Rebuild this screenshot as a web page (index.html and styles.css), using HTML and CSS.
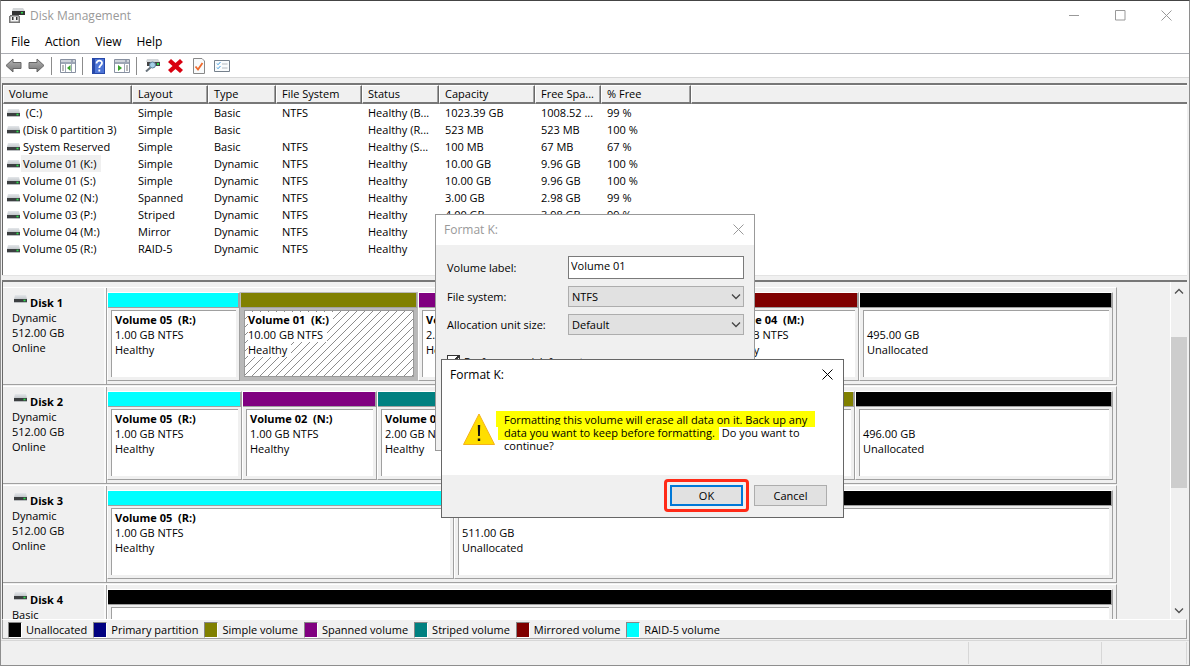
FILE: index.html
```html
<!DOCTYPE html>
<html lang="en">
<head>
<meta charset="utf-8">
<title>Disk Management</title>
<link rel="stylesheet" href="styles.css">
</head>
<body>
<svg class="defs" width="0" height="0" aria-hidden="true">
  <defs>
    <linearGradient id="lid" x1="0" y1="0" x2="0" y2="1"><stop offset="0" stop-color="#e4e7ea"/><stop offset="1" stop-color="#c3c7cb"/></linearGradient>
    <linearGradient id="arrow" x1="0" y1="0" x2="0" y2="1"><stop offset="0" stop-color="#b5b5b5"/><stop offset="1" stop-color="#747474"/></linearGradient>
    <pattern id="hatch" width="8" height="8" patternUnits="userSpaceOnUse"><path d="M-1 9L9 -1M-1 1L1 -1M7 9L9 7" stroke="#8c8c8c" stroke-width="1"/></pattern>
    <symbol id="drive" viewBox="0 0 13 8"><path d="M1 0h11l1 4H0z" fill="url(#lid)"/><path d="M0 4h13v3H0z" fill="#3c3f41"/><path d="M0 7h13v1H0z" fill="#b9bcbf"/><path d="M9.500 4.700h2v1.600h-2z" fill="#29e04a"/></symbol>
    <symbol id="close" viewBox="0 0 11 11"><path d="M.5.500l10 10M10.500.5l-10 10" stroke="currentColor" fill="none"/></symbol>
    <symbol id="chev" viewBox="0 0 10 6"><path d="M1 .5l4 4 4-4" stroke="currentColor" stroke-width="1.300" fill="none"/></symbol>
  </defs>
</svg>
<main class="window">
  <header class="titlebar">
    <svg class="app-icon" width="16" height="15" viewBox="0 0 16 15"><path d="M4 0h10l2 3H3z" fill="#d4d7d9"/><path d="M3 3h13v4H3z" fill="#333"/><path d="M12 4h2v1.500h-2z" fill="#2fd64b"/><path d="M1 7h9v1h1v7H0V8h1z" fill="#777"/><path d="M1.500 8.500h8v5h-8z" fill="#f4f4f4"/><path d="M3 9h1.500v3H3zM7 9h1.500v3H7z" fill="#333"/></svg>
    <h1>Disk Management</h1>
    <div class="caption-buttons">
      <button aria-label="Minimize"><svg width="11" height="11"><path d="M0 5.500h10" stroke="currentColor"/></svg></button>
      <button aria-label="Maximize"><svg width="11" height="11"><path d="M.5.500h9.500v9.500H.5z" stroke="currentColor" fill="none"/></svg></button>
      <button aria-label="Close"><svg width="11" height="11"><use href="#close"/></svg></button>
    </div>
  </header>
  <nav class="menubar"><button>File</button><button>Action</button><button>View</button><button>Help</button></nav>
  <div class="toolbar">
    <button aria-label="Back"><svg width="17" height="15" viewBox="0 0 17 15"><path d="M1 7.500L8 1v3.500h8v6H8V14z" fill="url(#arrow)" stroke="#666"/></svg></button>
    <button aria-label="Forward"><svg width="17" height="15" viewBox="0 0 17 15"><path d="M16 7.500L9 1v3.500H1v6h8V14z" fill="url(#arrow)" stroke="#666"/></svg></button>
    <span class="sep"></span>
    <button aria-label="Show console tree"><svg width="16" height="14" viewBox="0 0 16 14"><path d="M.5.500h15v13H.5z" fill="#fff" stroke="#8790a0"/><path d="M1 1h14v3H1z" fill="#9da6b5"/><path d="M1 2h10M13 2h2" stroke="#fff"/><path d="M1 4.500h14M5.500 5v8M11.500 5v8" stroke="#9da6b5"/><path d="M2 7h2M2 9h2M2 11h2" stroke="#777"/><path d="M10.500 6v6L7 9z" fill="#36a329"/></svg></button>
    <span class="sep"></span>
    <button aria-label="Help"><svg width="13" height="16" viewBox="0 0 13 16"><path d="M0 0h13v16H0z" fill="#2748a8"/><path d="M3 1h9v14H3z" fill="#4c74d6"/><path d="M4.500 5.500c0-4 6-3.500 5.500-.3C9.700 7.500 7.300 7.500 7.300 10M7.300 11.500v2" stroke="#fff" stroke-width="1.800" fill="none"/></svg></button>
    <button aria-label="Show action pane"><svg width="16" height="14" viewBox="0 0 16 14"><path d="M.5.500h15v13H.5z" fill="#fff" stroke="#8790a0"/><path d="M1 1h14v3H1z" fill="#9da6b5"/><path d="M1 2h10M13 2h2" stroke="#fff"/><path d="M1 4.500h14M10.500 5v8" stroke="#9da6b5"/><path d="M12 7h2M12 9h2M12 11h2" stroke="#777"/><path d="M4 6v6l4-3z" fill="#36a329"/></svg></button>
    <span class="sep"></span>
    <button aria-label="Refresh"><svg width="16" height="13" viewBox="0 0 16 13"><path d="M2 0h11l2 3H1z" fill="#d0d4d7"/><path d="M2 3h13v4H2z" fill="#444"/><path d="M12 4h2v2h-2z" fill="#2fd64b"/><path d="M5.500 8.500L1 12.500" stroke="#68737c" stroke-width="2"/><circle cx="7.500" cy="6" r="3" fill="#a6d0e8" stroke="#5c7f98"/></svg></button>
    <button aria-label="Delete"><svg width="15" height="14" viewBox="0 0 15 14"><path d="M3 0l4.500 4L12 0l3 3-4.500 4 4.500 4-3 3-4.500-4L3 14l-3-3 4.500-4L0 3z" fill="#d9000f"/></svg></button>
    <button aria-label="Properties"><svg width="12" height="16" viewBox="0 0 12 16"><path d="M.5.500H9l2.500 2.500v12.500H.5z" fill="#f8fafb" stroke="#888"/><path d="M2.500 8.500l2.500 3L9.500 5" stroke="#ef6a2c" stroke-width="1.800" fill="none"/></svg></button>
    <button aria-label="Settings"><svg width="16" height="12" viewBox="0 0 16 12"><path d="M.5.500h15v11H.5z" fill="#fafcfd" stroke="#75808c"/><path d="M3 3.500l1 1.200L6.500 2M3 7.500l1 1.200L6.500 6" stroke="#3d9be0" fill="none"/><path d="M8 4h5.500M8 8h5.500" stroke="#b4bac0"/></svg></button>
  </div>

  <section class="volumes">
    <table>
      <colgroup><col class="c-vol"><col class="c-lay"><col class="c-type"><col class="c-fs"><col class="c-stat"><col class="c-cap"><col class="c-free"><col class="c-pct"><col></colgroup>
      <thead><tr><th>Volume</th><th>Layout</th><th>Type</th><th>File System</th><th>Status</th><th>Capacity</th><th>Free Spa...</th><th>% Free</th><th></th></tr></thead>
      <tbody>
        <tr><td><svg class="drv"><use href="#drive"/></svg><span>&nbsp;(C:)</span></td><td>Simple</td><td>Basic</td><td>NTFS</td><td>Healthy (B...</td><td>1023.39 GB</td><td>1008.52 ...</td><td>99 %</td><td></td></tr>
        <tr><td><svg class="drv"><use href="#drive"/></svg><span>(Disk 0 partition 3)</span></td><td>Simple</td><td>Basic</td><td></td><td>Healthy (R...</td><td>523 MB</td><td>523 MB</td><td>100 %</td><td></td></tr>
        <tr><td><svg class="drv"><use href="#drive"/></svg><span>System Reserved</span></td><td>Simple</td><td>Basic</td><td>NTFS</td><td>Healthy (S...</td><td>100 MB</td><td>67 MB</td><td>67 %</td><td></td></tr>
        <tr><td><svg class="drv"><use href="#drive"/></svg><span class="picked">Volume 01 (K:)</span></td><td>Simple</td><td>Dynamic</td><td>NTFS</td><td>Healthy</td><td>10.00 GB</td><td>9.96 GB</td><td>100 %</td><td></td></tr>
        <tr><td><svg class="drv"><use href="#drive"/></svg><span>Volume 01 (S:)</span></td><td>Simple</td><td>Dynamic</td><td>NTFS</td><td>Healthy</td><td>10.00 GB</td><td>9.96 GB</td><td>100 %</td><td></td></tr>
        <tr><td><svg class="drv"><use href="#drive"/></svg><span>Volume 02 (N:)</span></td><td>Spanned</td><td>Dynamic</td><td>NTFS</td><td>Healthy</td><td>3.00 GB</td><td>2.98 GB</td><td>99 %</td><td></td></tr>
        <tr><td><svg class="drv"><use href="#drive"/></svg><span>Volume 03 (P:)</span></td><td>Striped</td><td>Dynamic</td><td>NTFS</td><td>Healthy</td><td>4.00 GB</td><td>3.98 GB</td><td>99 %</td><td></td></tr>
        <tr><td><svg class="drv"><use href="#drive"/></svg><span>Volume 04 (M:)</span></td><td>Mirror</td><td>Dynamic</td><td>NTFS</td><td>Healthy</td><td></td><td></td><td></td><td></td></tr>
        <tr><td><svg class="drv"><use href="#drive"/></svg><span>Volume 05 (R:)</span></td><td>RAID-5</td><td>Dynamic</td><td>NTFS</td><td>Healthy</td><td></td><td></td><td></td><td></td></tr>
      </tbody>
    </table>
  </section>
  <div class="splitter"></div>

  <section class="disks">
    <div class="disk-list">
      <article class="disk">
        <div class="disk-info"><h2><svg class="drv"><use href="#drive"/></svg>Disk 1</h2><p>Dynamic</p><p>512.00 GB</p><p>Online</p></div>
        <div class="parts" style="grid-template-columns:133fr 178fr 147fr 147fr 147fr 254fr">
          <div class="part raid"><div class="box"><b>Volume 05&nbsp; (R:)</b><span>1.00 GB NTFS</span><span>Healthy</span></div></div>
          <div class="part simple selected"><div class="box"><svg class="hatching" width="100%" height="100%"><rect width="100%" height="100%" fill="url(#hatch)"/></svg><b>Volume 01&nbsp; (K:)</b><span>10.00 GB NTFS</span><span>Healthy</span></div></div>
          <div class="part spanned"><div class="box"><b>Volume 02&nbsp; (N:)</b><span>2.00 GB NTFS</span><span>Healthy</span></div></div>
          <div class="part striped"><div class="box"></div></div>
          <div class="part mirrored"><div class="box"><b>Volume 04&nbsp; (M:)</b><span>1.00 GB NTFS</span><span>Healthy</span></div></div>
          <div class="part"><div class="box"><b>&nbsp;</b><span>495.00 GB</span><span>Unallocated</span></div></div>
        </div>
      </article>
      <article class="disk">
        <div class="disk-info"><h2><svg class="drv"><use href="#drive"/></svg>Disk 2</h2><p>Dynamic</p><p>512.00 GB</p><p>Online</p></div>
        <div class="parts" style="grid-template-columns:135fr 135fr 148fr 148fr 182fr 258fr">
          <div class="part raid"><div class="box"><b>Volume 05&nbsp; (R:)</b><span>1.00 GB NTFS</span><span>Healthy</span></div></div>
          <div class="part spanned"><div class="box"><b>Volume 02&nbsp; (N:)</b><span>1.00 GB NTFS</span><span>Healthy</span></div></div>
          <div class="part striped"><div class="box"><b>Volume 03&nbsp; (P:)</b><span>2.00 GB NTFS</span><span>Healthy</span></div></div>
          <div class="part mirrored"><div class="box"></div></div>
          <div class="part simple"><div class="box"></div></div>
          <div class="part"><div class="box"><b>&nbsp;</b><span>496.00 GB</span><span>Unallocated</span></div></div>
        </div>
      </article>
      <article class="disk">
        <div class="disk-info"><h2><svg class="drv"><use href="#drive"/></svg>Disk 3</h2><p>Dynamic</p><p>512.00 GB</p><p>Online</p></div>
        <div class="parts" style="grid-template-columns:347fr 659fr">
          <div class="part raid"><div class="box"><b>Volume 05&nbsp; (R:)</b><span>1.00 GB NTFS</span><span>Healthy</span></div></div>
          <div class="part"><div class="box"><b>&nbsp;</b><span>511.00 GB</span><span>Unallocated</span></div></div>
        </div>
      </article>
      <article class="disk">
        <div class="disk-info"><h2><svg class="drv"><use href="#drive"/></svg>Disk 4</h2><p>Basic</p></div>
        <div class="parts"><div class="part"><div class="box"></div></div></div>
      </article>
    </div>
    <div class="scrollbar">
      <button aria-label="Scroll up"><svg class="up" width="10" height="6"><use href="#chev"/></svg></button>
      <div class="track"><div class="thumb"></div></div>
      <button aria-label="Scroll down"><svg width="10" height="6"><use href="#chev"/></svg></button>
    </div>
  </section>

  <ul class="legend">
    <li class="none">Unallocated</li><li class="primary">Primary partition</li><li class="simple">Simple volume</li><li class="spanned">Spanned volume</li><li class="striped">Striped volume</li><li class="mirrored">Mirrored volume</li><li class="raid">RAID-5 volume</li>
  </ul>
  <footer class="statusbar"><span></span><span></span><span></span></footer>

  <section class="dialog format" role="dialog" aria-label="Format">
    <div class="dialog-title"><span>Format K:</span><button aria-label="Close"><svg width="11" height="11"><use href="#close"/></svg></button></div>
    <form class="form">
      <label for="vlabel">Volume label:</label><input id="vlabel" type="text" value="Volume 01">
      <label for="fs">File system:</label><div class="select"><select id="fs"><option>NTFS</option></select><svg width="10" height="6"><use href="#chev"/></svg></div>
      <label for="unit">Allocation unit size:</label><div class="select"><select id="unit"><option>Default</option></select><svg width="10" height="6"><use href="#chev"/></svg></div>
      <div class="check"><input type="checkbox" id="quick" checked><label for="quick">Perform a quick format</label></div>
    </form>
  </section>

  <section class="dialog confirm" role="alertdialog" aria-label="Confirm format">
    <div class="dialog-title"><span>Format K:</span><button aria-label="Close"><svg width="11" height="11"><use href="#close"/></svg></button></div>
    <div class="message">
      <svg width="32" height="32" viewBox="0 0 32 32"><path d="M16 1L31.500 31.500H.5z" fill="#ffde00" stroke="#f5b21a"/><path d="M14.800 12h2.400l-.3 11h-1.800z" fill="#111"/><path d="M14.800 25.500h2.400v2.500h-2.400z" fill="#111"/></svg>
      <p><mark class="first">Formatting this volume will erase all data on it. Back up any</mark><br><mark>data you want to keep before formatting.</mark> Do you want to<br>continue?</p>
    </div>
    <div class="actions"><div class="ring"><button class="ok">OK</button></div><button>Cancel</button></div>
  </section>
</main>
</body>
</html>
```
FILE: styles.css
```css
* { box-sizing: border-box; }
body {
  margin: 0;
  font: 11px/15px "Open Sans", "Noto Sans", sans-serif;
  color: #000;
  background: #f0f0f0;
}
button, input, select { font: inherit; color: inherit; }
button { padding: 0; border: 0; background: none; }
h1, h2, p, ul { margin: 0; padding: 0; font-size: inherit; }
svg { display: block; }
.defs { position: absolute; }

.window {
  position: relative;
  display: flex;
  flex-direction: column;
  height: 100vh;
  min-height: 500px;
  overflow: hidden;
  border: 1px solid #8e8e8e;
  border-top-color: #444;
}
.titlebar {
  display: flex;
  align-items: center;
  height: 29px;
  padding-left: 8px;
  background: #fff;
  color: #999;
}
.titlebar h1 { flex: 1; padding-left: 5px; font-size: 12px; font-weight: 400; }
.caption-buttons { display: flex; }
.caption-buttons button { width: 46px; height: 28px; display: grid; place-items: center; }
.menubar {
  display: flex;
  height: 24px;
  padding: 0 0 0 2px;
  background: #fff;
  border-bottom: 1px solid #abadb3;
}
.menubar button { padding: 0 8px; font-size: 12px; }
.menubar button + button { padding-left: 7px; }
.toolbar {
  display: flex;
  align-items: center;
  height: 24px;
  padding-left: 1px;
  background: #fff;
  border-bottom: 1px solid #d7d7d7;
}
.toolbar button { width: 23px; height: 22px; display: grid; place-items: center; }
.sep { width: 1px; height: 18px; margin: 0 4px 0 3px; background: #8c8c8c; }

.volumes {
  height: 192px;
  flex: none;
  margin: 5px 2px 0 1px;
  border-top: 2px solid #777;
  border-left: 1px solid #696969;
  background: #fff;
}
table { width: 100%; table-layout: fixed; border-collapse: separate; border-spacing: 0; }
.c-vol { width: 129px; }
.c-lay { width: 76px; }
.c-type { width: 68px; }
.c-fs { width: 86px; }
.c-stat { width: 77px; }
.c-cap { width: 96px; }
.c-free { width: 66px; }
.c-pct { width: 90px; }
th {
  height: 19px;
  padding: 0 0 0 5px;
  text-align: left;
  font-weight: 400;
  line-height: 14px;
  background: #f0f0f0;
  border: 1px solid #fff;
  border-right-color: #696969;
  border-bottom: 2px solid #777;
  box-shadow: inset -1px 0 #a0a0a0;
}
th:last-child { border-right: 0; box-shadow: none; }
td { height: 17px; padding: 0 0 0 6px; line-height: 17px; white-space: nowrap; }
td:first-child { display: flex; align-items: center; padding-left: 4px; }
td span { padding: 0 5px 0 2px; margin-left: 1px; }
.picked { background: #f0f0f0; }
.drv { width: 13px; height: 8px; flex: none; }

.splitter {
  flex: none;
  height: 7px;
  margin: 0 2px 0 1px;
  border-top: 1px solid #e3e3e3;
  border-bottom: 2px solid #777;
}
.disks {
  flex: 1;
  min-height: 0;
  display: flex;
  margin: 0 2px 0 1px;
  border-left: 1px solid #696969;
}
.disk-list { flex: 1; overflow: hidden; padding: 5px 53px 0 0; }
.disk {
  display: flex;
  height: 98px;
  margin-bottom: 1px;
  border-top: 1px solid #fff;
  border-bottom: 1px solid #a0a0a0;
  border-right: 1px solid #a0a0a0;
}
.disk-info { width: 104px; flex: none; padding: 7px 0 0 9px; border-right: 1px solid #a0a0a0; box-shadow: inset -2px 0 #fafafa; }
.disk-info h2 { display: flex; gap: 3px; padding-left: 2px; }
.parts { flex: 1; display: grid; padding: 4px 3px 3px 0; }
.part {
  display: flex;
  flex-direction: column;
  min-width: 0;
  border: 1px solid #fff;
  border-right-color: #a0a0a0;
  border-bottom-color: #a0a0a0;
  --kind: #000;
}
.part::before {
  content: "";
  flex: none;
  height: 14px;
  background: var(--kind);
  border-right: 1px solid #a0a0a0;
  border-bottom: 1px solid #a0a0a0;
}
.box {
  position: relative;
  flex: 1;
  display: flex;
  flex-direction: column;
  align-items: flex-start;
  margin: 2px 3px 3px;
  padding: 1px 3px;
  overflow: hidden;
  white-space: nowrap;
  background: #fff;
  border-top: 1px solid #a0a0a0;
  border-left: 1px solid #a0a0a0;
}
.selected { background: #b9b9b9; border-color: #b9b9b9; }
.selected .box { border: 1px solid #999; }
.selected .box b, .selected .box span { position: relative; background: #fff; padding-right: 4px; }
.hatching { position: absolute; inset: 0; }
.raid { --kind: #00ffff; }
.simple { --kind: #808000; }
.spanned { --kind: #800080; }
.striped { --kind: #008080; }
.mirrored { --kind: #800000; }
.primary { --kind: #000080; }
.none { --kind: #000; }

.scrollbar { width: 17px; display: flex; flex-direction: column; color: #505050; border-left: 1px solid #fff; }
.scrollbar button { height: 17px; display: grid; place-items: center; }
.track { flex: 1; padding-top: 38px; }
.thumb { height: 57%; background: #cdcdcd; }
.up { transform: rotate(180deg); }

.legend {
  display: flex;
  gap: 6px;
  flex: none;
  height: 20px;
  margin: 0 2px 0 1px;
  padding: 2px 0 0 5px;
  list-style: none;
  border: 1px solid #a0a0a0;
  border-top-color: #fff;
}
.legend li { display: flex; gap: 4px; }
.legend li::before { content: ""; width: 12px; height: 14px; background: var(--kind); border: 1px solid #fff; border-left-color: #888; border-top-color: #888; }
.statusbar {
  flex: none;
  display: flex;
  height: 25px;
  margin-top: 1px;
  padding: 1px 2px 1px 0;
  border-top: 1px solid #d7d7d7;
}
.statusbar span { width: 85px; border-right: 1px solid #d7d7d7; }
.statusbar span:nth-child(2) { width: 133px; }
.statusbar span:first-child { flex: 1; }

.dialog { position: absolute; border: 1px solid #999; background: #f0f0f0; }
.dialog-title { display: flex; align-items: center; justify-content: space-between; height: 30px; padding: 0 10px 2px 8px; background: #fff; font-size: 12px; }
.format { left: 434px; top: 213px; width: 320px; height: 237px; }
.format .dialog-title { color: #999; }
.form {
  display: grid;
  grid-template-columns: 121px 176px;
  grid-template-rows: 23px 21px 21px;
  row-gap: 7px;
  align-items: center;
  padding: 11px 0 0 11px;
}
.form input[type="text"] { height: 23px; padding: 0 2px 4px; border: 1px solid #7a7a7a; background: #fff; }
.select { position: relative; height: 21px; }
.select select { width: 100%; height: 100%; padding: 0 3px; appearance: none; background: #e1e1e1; border: 1px solid #adadad; border-radius: 0; }
.select svg { position: absolute; right: 3px; top: 8px; color: #444; }
.check { grid-column: 1 / 3; padding-top: 12px; display: flex; align-items: center; gap: 4px; }
.check input { appearance: none; flex: none; width: 13px; height: 13px; margin: 0; border: 1px solid #333; background: linear-gradient(135deg, #fff 45%, #333 45%, #333 55%, #fff 55%); }

.confirm { left: 440px; top: 358px; width: 403px; border-color: #666; }
.message { display: flex; gap: 9px; height: 85px; padding: 23px 0 0 21px; background: #fff; line-height: 13px; }
.message p { white-space: nowrap; }
mark { background: #ff0; padding: 0 4px 0 6px; margin-left: -6px; }
.message mark.first { padding: 1px 8px 0 8px; margin-left: -8px; }
.message svg { flex: none; }
.actions { display: flex; align-items: center; justify-content: flex-end; gap: 5px; padding: 4px 16px 5px 0; }
.actions button { width: 73px; height: 21px; border: 1px solid #adadad; background: #e1e1e1; }
.ring { padding: 3px; border: 3px solid #ff2a17; border-radius: 4px; }
.actions .ok { border: 2px solid #0078d7; display: block; width: 73px; }
```
